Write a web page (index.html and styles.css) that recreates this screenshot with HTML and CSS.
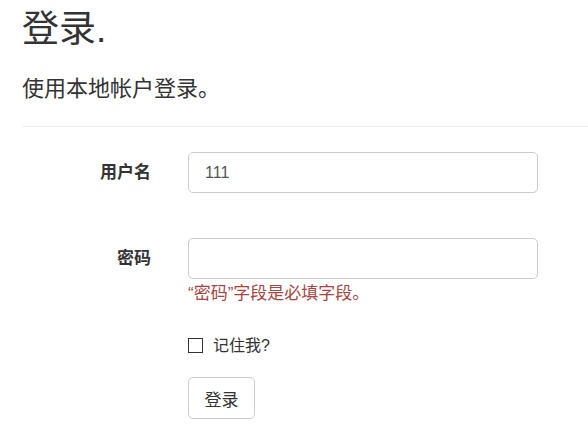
FILE: index.html
```html
<!DOCTYPE html>
<html lang="zh-CN">
<head>
<meta charset="utf-8">
<title>登录</title>
<link rel="stylesheet" href="styles.css">
</head>
<body>
<div class="page">
  <h2 class="title">登录.</h2>
  <h4 class="subtitle">使用本地帐户登录。</h4>
  <hr class="divider">
  <form class="form">
    <div class="row">
      <label class="label" for="user">用户名</label>
      <div class="field"><input class="input" id="user" type="text" value="111"></div>
    </div>
    <div class="row row-pw">
      <label class="label" for="pw">密码</label>
      <div class="field">
        <input class="input" id="pw" type="password">
        <span class="error">“密码”字段是必填字段。</span>
      </div>
    </div>
    <div class="row row-check">
      <div></div>
      <div class="field check">
        <input class="checkbox" id="remember" type="checkbox">
        <label class="check-label" for="remember">记住我?</label>
      </div>
    </div>
    <div class="row row-btn">
      <div></div>
      <div class="field"><button class="btn" type="submit">登录</button></div>
    </div>
  </form>
</div>
</body>
</html>
```
FILE: styles.css
```css
html, body {
  margin: 0;
  padding: 0;
  background: #fff;
}
body {
  font-family: "Liberation Sans", "Noto Sans CJK SC", sans-serif;
  color: #333;
}
.page {
  padding-left: 22px;
}
.title {
  margin: 10px 0 0 0;
  font-size: 37px;
  line-height: 40px;
  font-weight: normal;
}
.subtitle {
  margin: 27px 0 0 0;
  font-size: 22px;
  line-height: 23px;
  font-weight: normal;
}
.divider {
  margin: 26px 0 0 0;
  border: 0;
  border-top: 1px solid #eee;
  height: 0;
}
.form {
  margin: 25px 0 0 0;
}
.row {
  display: grid;
  grid-template-columns: 129px 350px;
  column-gap: 37px;
}
.row-pw {
  margin-top: 45px;
}
.row-check {
  margin-top: 29px;
}
.row-btn {
  margin-top: 20px;
}
.label {
  text-align: right;
  font-weight: bold;
  font-size: 17px;
  line-height: 41px;
}
.field {
  display: flex;
  flex-direction: column;
}
.input {
  box-sizing: border-box;
  width: 350px;
  height: 41px;
  margin: 0;
  padding: 0 16px;
  border: 1px solid #ccc;
  border-radius: 5px;
  font-family: "Liberation Sans", "Noto Sans CJK SC", sans-serif;
  font-size: 16px;
  color: #555;
  background: #fff;
  outline: none;
}
.error {
  color: #a94442;
  font-size: 17px;
  line-height: 23px;
  margin-top: 3px;
}
.check {
  flex-direction: row;
  align-items: center;
  height: 23px;
}
.checkbox {
  appearance: none;
  -webkit-appearance: none;
  box-sizing: border-box;
  width: 15px;
  height: 15px;
  margin: 0 10px 0 0;
  border: 1px solid #333;
  background: #fff;
}
.check-label {
  font-size: 16px;
  line-height: 23px;
}
.btn {
  box-sizing: border-box;
  width: 67px;
  height: 42px;
  padding: 0;
  border: 1px solid #ccc;
  border-radius: 5px;
  background: #fff;
  color: #333;
  font-family: "Liberation Sans", "Noto Sans CJK SC", sans-serif;
  font-size: 17px;
}
```
